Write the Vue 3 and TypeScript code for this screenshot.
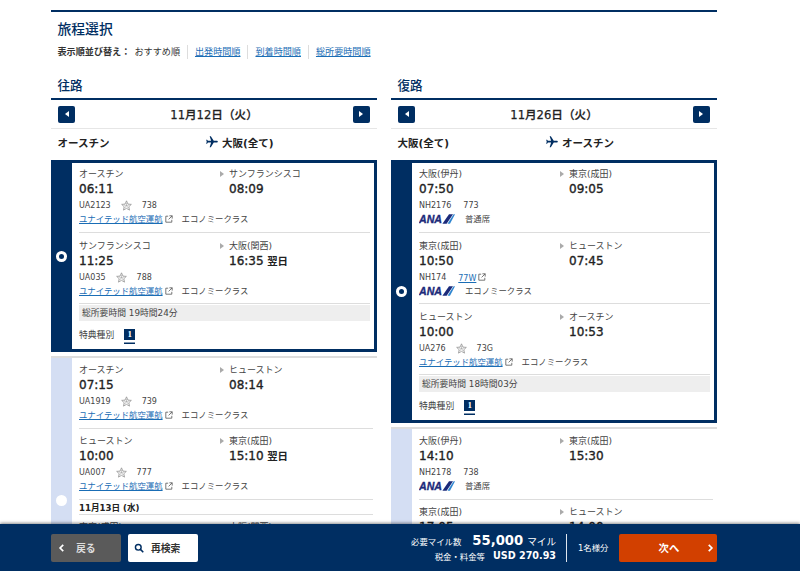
<script setup lang="ts">
type Airline = 'ua' | 'ana'
interface Segment {
  from: string
  to: string
  dep: string
  arr: string
  nextDay?: boolean
  flight: string
  craft: string
  craftLink?: boolean
  airline: Airline
  cabin: string
  dateBefore?: string
}
interface Option {
  selected: boolean
  segments: Segment[]
  total: string
}
interface Leg {
  title: string
  date: string
  from: string
  to: string
  options: Option[]
}

const ECON = 'エコノミークラス'

const legs: Leg[] = [
  {
    title: '往路',
    date: '11月12日（火）',
    from: 'オースチン',
    to: '大阪(全て)',
    options: [
      {
        selected: true,
        total: '総所要時間 19時間24分',
        segments: [
          { from: 'オースチン', to: 'サンフランシスコ', dep: '06:11', arr: '08:09', flight: 'UA2123', craft: '738', airline: 'ua', cabin: ECON },
          { from: 'サンフランシスコ', to: '大阪(関西)', dep: '11:25', arr: '16:35', nextDay: true, flight: 'UA035', craft: '788', airline: 'ua', cabin: ECON },
        ],
      },
      {
        selected: false,
        total: '総所要時間 22時間10分',
        segments: [
          { from: 'オースチン', to: 'ヒューストン', dep: '07:15', arr: '08:14', flight: 'UA1919', craft: '739', airline: 'ua', cabin: ECON },
          { from: 'ヒューストン', to: '東京(成田)', dep: '10:00', arr: '15:10', nextDay: true, flight: 'UA007', craft: '777', airline: 'ua', cabin: ECON },
          { dateBefore: '11月13日 (水)', from: '東京(成田)', to: '大阪(関西)', dep: '17:25', arr: '18:45', flight: 'NH2179', craft: '738', airline: 'ana', cabin: '普通席' },
        ],
      },
    ],
  },
  {
    title: '復路',
    date: '11月26日（火）',
    from: '大阪(全て)',
    to: 'オースチン',
    options: [
      {
        selected: true,
        total: '総所要時間 18時間03分',
        segments: [
          { from: '大阪(伊丹)', to: '東京(成田)', dep: '07:50', arr: '09:05', flight: 'NH2176', craft: '773', airline: 'ana', cabin: '普通席' },
          { from: '東京(成田)', to: 'ヒューストン', dep: '10:50', arr: '07:45', flight: 'NH174', craft: '77W', craftLink: true, airline: 'ana', cabin: ECON },
          { from: 'ヒューストン', to: 'オースチン', dep: '10:00', arr: '10:53', flight: 'UA276', craft: '73G', airline: 'ua', cabin: ECON },
        ],
      },
      {
        selected: false,
        total: '総所要時間 20時間28分',
        segments: [
          { from: '大阪(伊丹)', to: '東京(成田)', dep: '14:10', arr: '15:30', flight: 'NH2178', craft: '738', airline: 'ana', cabin: '普通席' },
          { from: '東京(成田)', to: 'ヒューストン', dep: '17:05', arr: '14:00', flight: 'NH174', craft: '77W', airline: 'ana', cabin: ECON },
          { from: 'ヒューストン', to: 'オースチン', dep: '16:00', arr: '16:53', flight: 'UA278', craft: '73G', airline: 'ua', cabin: ECON },
        ],
      },
    ],
  },
]

const sortLinks: string[] = ['出発時間順', '到着時間順', '総所要時間順']
</script>

<template>
  <div class="page">
    <main class="content">
      <h1 class="title">旅程選択</h1>
      <div class="sort">
        <b class="sort-label">表示順並び替え：</b>
        <span class="sort-item first">おすすめ順</span>
        <a v-for="s in sortLinks" :key="s" class="sort-item link">{{ s }}</a>
      </div>

      <div class="legs">
        <section v-for="leg in legs" :key="leg.title" class="leg">
          <h2 class="leg-title">{{ leg.title }}</h2>
          <div class="date-row">
            <button class="arrow"><i class="tri left"></i></button>
            <span class="date">{{ leg.date }}</span>
            <button class="arrow"><i class="tri right"></i></button>
          </div>
          <div class="route">
            <span class="route-from">{{ leg.from }}</span>
            <span class="route-to">
              <svg class="plane" viewBox="0 0 24 24" width="14" height="14">
                <path transform="rotate(90 12 12)" fill="#002e62" d="M21 16v-2l-8-5V3.5c0-.83-.67-1.5-1.5-1.5S10 2.67 10 3.5V9l-8 5v2l8-2.5V19l-2 1.5V22l3.5-1 3.5 1v-1.5L13 19v-5.5l8 2.5z" />
              </svg>
              {{ leg.to }}
            </span>
          </div>

          <div class="options">
            <article v-for="(opt, oi) in leg.options" :key="oi" class="option" :class="{ selected: opt.selected }">
              <div class="strip"><span class="radio"></span></div>
              <div class="body">
                <template v-for="(seg, si) in opt.segments" :key="si">
                  <div v-if="seg.dateBefore" class="date-sep">{{ seg.dateBefore }}</div>
                  <div class="seg">
                    <div class="cols names">
                      <span>{{ seg.from }}</span>
                      <span class="dest"><i class="mini"></i>{{ seg.to }}</span>
                    </div>
                    <div class="cols times">
                      <span>{{ seg.dep }}</span>
                      <span>{{ seg.arr }}<em v-if="seg.nextDay" class="day"> 翌日</em></span>
                    </div>
                    <div class="flight">
                      <span>{{ seg.flight }}</span>
                      <svg v-if="seg.airline === 'ua'" class="star" viewBox="0 0 20 20" width="11" height="11">
                        <path fill="#fff" stroke="#888" stroke-width="1.3" stroke-linejoin="round" d="M10 1.5 12.6 7.4 18.8 8 14.2 12.2 15.5 18.4 10 15.2 4.5 18.4 5.8 12.2 1.2 8 7.4 7.4Z" />
                        <path stroke="#999" stroke-width="1" fill="none" d="M10 5v5M15 9l-5 1M13.5 15l-3.5-5M6.5 15l3.5-5M5 9l5 1" />
                      </svg>
                      <span v-if="!seg.craftLink" class="craft" :class="{ tight: seg.airline === 'ana' }">{{ seg.craft }}</span>
                      <span v-else class="craft tight"><a class="link">{{ seg.craft }}</a>
                        <svg class="ext" viewBox="0 0 10 10" width="8" height="8"><path d="M4 1.5H1v7.5h7.5V6M5.5 1h3.5v3.5M9 1 4.5 5.5" fill="none" stroke="#555" stroke-width="1" /></svg>
                      </span>
                    </div>
                    <div class="carrier">
                      <template v-if="seg.airline === 'ua'">
                        <a class="link">ユナイテッド航空運航</a>
                        <svg class="ext" viewBox="0 0 10 10" width="8" height="8"><path d="M4 1.5H1v7.5h7.5V6M5.5 1h3.5v3.5M9 1 4.5 5.5" fill="none" stroke="#555" stroke-width="1" /></svg>
                        <span class="cabin">{{ seg.cabin }}</span>
                      </template>
                      <template v-else>
                        <svg class="ana" viewBox="0 0 36 10" width="36" height="10">
                          <text x="0" y="9.4" textLength="23" lengthAdjust="spacingAndGlyphs" font-family="'Liberation Sans', sans-serif" font-size="11" font-weight="700" font-style="italic" fill="#1b2a7a" stroke="#1b2a7a" stroke-width="0.35">ANA</text>
                          <path d="M23.4 9.8 30 .2h4L27.6 9.8Z" fill="#1b2a7a" />
                          <path d="M28.5 9.8 34.6 .2H36L31 9.8Z" fill="#2f86d0" />
                        </svg>
                        <span class="cabin ana-cabin">{{ seg.cabin }}</span>
                      </template>
                    </div>
                  </div>
                </template>
                <div class="total">{{ opt.total }}</div>
                <div class="award">
                  <span>特典種別</span>
                  <span class="badge">1</span>
                </div>
              </div>
            </article>
          </div>
        </section>
      </div>
    </main>

    <footer class="bar">
      <button class="btn back">
        <svg viewBox="0 0 10 12" width="7" height="10"><path d="M7.5 1.5 3 6l4.5 4.5" fill="none" stroke="#fff" stroke-width="2.4" /></svg>
        <span>戻る</span>
      </button>
      <button class="btn search">
        <svg viewBox="0 0 14 14" width="10" height="10"><circle cx="6" cy="6" r="4" fill="none" stroke="#002e62" stroke-width="2" /><path d="M9 9l4 4" stroke="#002e62" stroke-width="2.2" /></svg>
        <span>再検索</span>
      </button>
      <div class="spacer"></div>
      <div class="price">
        <div class="price-row">
          <span class="p-label">必要マイル数</span>
          <b class="miles">55,000</b>
          <span class="miles-unit">マイル</span>
        </div>
        <div class="price-row">
          <span class="p-label">税金・料金等</span>
          <b class="usd">USD 270.93</b>
        </div>
      </div>
      <div class="pax">1名様分</div>
      <button class="btn go">
        <span>次へ</span>
        <svg class="go-chev" viewBox="0 0 10 12" width="7" height="10"><path d="M2.5 1.5 7 6l-4.5 4.5" fill="none" stroke="#fff" stroke-width="2.4" /></svg>
      </button>
    </footer>
  </div>
</template>

<style scoped>
.page {
  position: relative;
  width: 800px;
  height: 571px;
  overflow: hidden;
  background: #fff;
  color: #333;
  font-family: "DejaVu Sans", "Noto Sans CJK JP", sans-serif;
}
.content {
  width: 666px;
  margin-left: 51px;
  padding-top: 10px;
}
.title {
  margin: 0;
  border-top: 2px solid #002e62;
  padding: 8px 0 0 6.5px;
  height: 30px;
  box-sizing: border-box;
  font-size: 13.8px;
  line-height: 18px;
  font-weight: 500;
  color: #002e62;
}
.sort {
  display: flex;
  align-items: center;
  height: 14px;
  margin-top: 5px;
  padding-left: 6.5px;
  font-size: 9.1px;
  line-height: 14px;
  color: #333;
}
.sort-label {
  width: 77px;
  font-weight: 700;
  white-space: nowrap;
}
.sort-item {
  padding: 0 7px;
  border-left: 1px solid #ddd;
  white-space: nowrap;
}
.sort-item.first {
  padding-left: 0;
  border-left: 0;
}
.link {
  color: #1a6db5;
  text-decoration: underline;
}
.legs {
  display: flex;
  gap: 14px;
  margin-top: 18px;
}
.leg {
  width: 326px;
  flex: none;
}
.leg-title {
  margin: 0;
  height: 20px;
  padding: 1px 0 0 6.5px;
  font-size: 12.6px;
  line-height: 16px;
  font-weight: 500;
  color: #002e62;
  border-bottom: 2px solid #002e62;
}
.date-row {
  display: flex;
  align-items: center;
  justify-content: space-between;
  height: 28px;
  padding: 0 7px;
  border-bottom: 1px solid #e6e6e6;
}
.arrow {
  display: flex;
  align-items: center;
  justify-content: center;
  width: 17px;
  height: 17px;
  padding: 0;
  border: 0;
  border-radius: 2px;
  background: #002e62;
}
.tri {
  display: block;
  width: 0;
  height: 0;
  border-top: 3.5px solid transparent;
  border-bottom: 3.5px solid transparent;
}
.tri.left {
  border-right: 4px solid #fff;
}
.tri.right {
  border-left: 4px solid #fff;
}
.date {
  font-size: 11.6px;
  font-weight: 500;
  color: #222;
  -webkit-text-stroke: 0.25px #222;
}
.route {
  display: flex;
  align-items: center;
  height: 31px;
  padding: 0 0 5px 6.5px;
  box-sizing: border-box;
  font-size: 10.5px;
  font-weight: 700;
  color: #222;
}
.route-from {
  width: 147.5px;
}
.route-to {
  display: flex;
  align-items: center;
  gap: 3px;
}
.options {
  display: flex;
  flex-direction: column;
}
.option {
  display: flex;
  margin-bottom: 4px;
}
.option:not(.selected) {
  border-top: 2px solid #ddd;
}
.option:not(.selected) .body {
  padding-bottom: 20px;
}
.option.selected {
  background: #002e62;
  padding: 3px 3px 3px 0;
}
.strip {
  flex: none;
  width: 21px;
  display: flex;
  align-items: center;
  justify-content: center;
  background: #d4def3;
}
.selected .strip {
  background: #002e62;
}
.radio {
  position: relative;
  display: block;
  width: 11px;
  height: 11px;
  border-radius: 50%;
  background: #fff;
}
.selected .radio::after {
  content: "";
  position: absolute;
  left: 3px;
  top: 3px;
  width: 5px;
  height: 5px;
  border-radius: 50%;
  background: #002e62;
}
.body {
  flex: 1;
  min-width: 0;
  padding: 0 4px 8px 7px;
  background: #fff;
}
.seg {
  padding: 5px 0 6px;
  border-bottom: 1px solid #ddd;
}
.selected .seg:first-child {
  padding-top: 4px;
}
.selected .seg + .seg {
  padding-top: 6px;
  padding-bottom: 5px;
}
.seg:last-of-type {
  border-bottom: 0;
}
.cols {
  display: grid;
  grid-template-columns: 150px 1fr;
}
.names {
  height: 14px;
  font-size: 9px;
  line-height: 14px;
  color: #444;
}
.dest {
  position: relative;
}
.mini {
  position: absolute;
  left: -9px;
  top: 3.5px;
  width: 0;
  height: 0;
  border-top: 3.5px solid transparent;
  border-bottom: 3.5px solid transparent;
  border-left: 4px solid #aaa;
}
.times {
  height: 16px;
  font-size: 12px;
  line-height: 16px;
  font-weight: 400;
  color: #222;
  -webkit-text-stroke: 0.35px #222;
}
.day {
  font-style: normal;
  font-size: 10.4px;
  font-weight: 700;
  -webkit-text-stroke: 0;
}
.flight {
  display: flex;
  align-items: center;
  height: 15px;
  padding-top: 2px;
  box-sizing: border-box;
  font-size: 8px;
  color: #444;
  white-space: nowrap;
}
.star {
  margin: 0 10px;
}
.craft.tight {
  margin-left: 12px;
}
.carrier {
  display: flex;
  align-items: center;
  height: 14px;
  font-size: 8.4px;
  line-height: 14px;
  color: #444;
  white-space: nowrap;
}
.ext {
  margin-left: 2px;
}
.cabin {
  margin-left: 9px;
}
.ana {
  display: block;
}
.ana-cabin {
  margin-left: 10px;
}
.date-sep {
  height: 15px;
  padding-top: 1px;
  box-sizing: border-box;
  font-size: 8.6px;
  line-height: 14px;
  font-weight: 700;
  color: #222;
  border-bottom: 1px solid #ddd;
}
.total {
  height: 16px;
  margin-top: 1px;
  padding-left: 3px;
  background: #eee;
  font-size: 8.8px;
  line-height: 16px;
  color: #444;
}
.award {
  display: flex;
  align-items: center;
  gap: 10px;
  height: 14px;
  margin-top: 6px;
  font-size: 8.8px;
  color: #444;
}
.badge {
  width: 11px;
  height: 11px;
  background: #002e62;
  box-shadow: 0 2.5px 0 #fff, 0 4px 0 #002e62;
  color: #fff;
  font-size: 9px;
  font-weight: 700;
  line-height: 11px;
  text-align: center;
  font-family: "Liberation Serif", serif;
}
.bar {
  position: absolute;
  left: 0;
  right: 0;
  bottom: 0;
  display: flex;
  align-items: center;
  height: 47px;
  padding: 0 83px 0 51px;
  box-sizing: border-box;
  background: #002e62;
  box-shadow: 0 -1px 3px rgba(0, 0, 0, 0.45);
  color: #fff;
}
.btn {
  display: flex;
  align-items: center;
  height: 28px;
  padding: 0;
  border: 0;
  border-radius: 2px;
  font-family: inherit;
  font-size: 9.8px;
  font-weight: 700;
  white-space: nowrap;
}
.back {
  width: 70px;
  padding-left: 7px;
  gap: 11px;
  background: #5a5a5a;
  color: #ddd;
}
.search {
  width: 70px;
  margin-left: 7px;
  padding-left: 6px;
  gap: 7px;
  background: #fff;
  color: #333;
}
.spacer {
  flex: 1;
}
.price {
  display: flex;
  flex-direction: column;
  align-items: flex-end;
  padding-top: 1px;
}
.price-row {
  display: flex;
  align-items: center;
  height: 15px;
  white-space: nowrap;
}
.p-label {
  font-size: 8.4px;
}
.miles {
  margin-left: 11px;
  font-size: 13.2px;
}
.miles-unit {
  margin-left: 4px;
  font-size: 9.6px;
}
.usd {
  margin-left: 8px;
  font-size: 9.6px;
}
.pax {
  height: 28px;
  margin-left: 10px;
  padding-left: 11px;
  width: 53px;
  box-sizing: border-box;
  border-left: 1px solid #dfe6ef;
  font-size: 8.4px;
  line-height: 28px;
}
.go {
  position: relative;
  justify-content: center;
  width: 98px;
  box-sizing: border-box;
  padding-left: 2px;
  background: #d24000;
  color: #fff;
  font-size: 10.4px;
}
.go-chev {
  position: absolute;
  right: 3px;
  top: 9px;
}
</style>
